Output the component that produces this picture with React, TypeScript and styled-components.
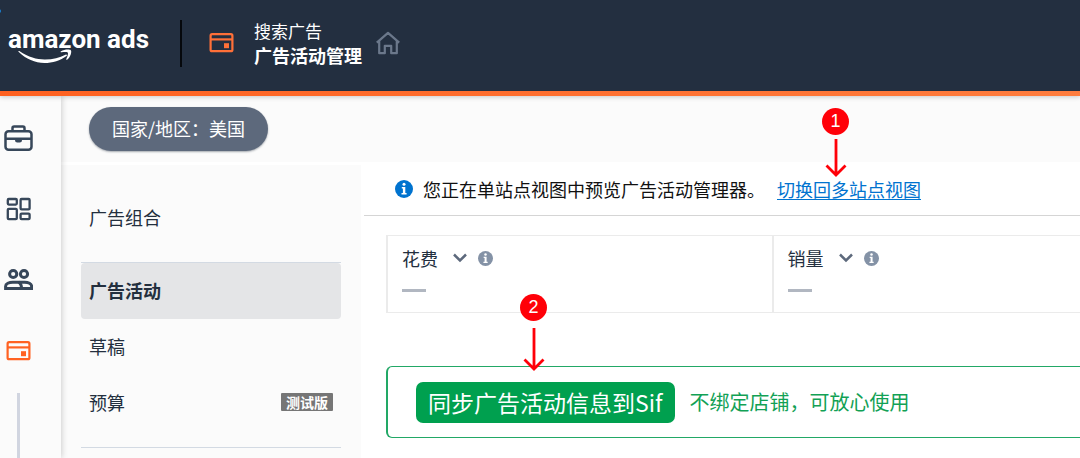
import React from "react";
import styled, { createGlobalStyle } from "styled-components";

const GlobalStyle = createGlobalStyle`
  *, *::before, *::after { box-sizing: border-box; }
  body {
    margin: 0;
    background: #fff;
    color: #232f3e;
    font-family: "Noto Sans CJK SC", sans-serif;
    font-size: 18px;
    line-height: 24px;
    overflow-x: hidden;
  }
`;

const Page = styled.div`
  min-height: 100vh;
  display: flex;
  flex-direction: column;
`;

const Header = styled.header`
  position: relative;
  z-index: 2;
  display: flex;
  align-items: center;
  height: 96px;
  padding: 0 8px 10px;
  color: #fff;
  background:
    linear-gradient(90deg, #ff6120, #ff7d3e) bottom / 100% 5px no-repeat,
    #232f40;
  box-shadow: 0 1px 5px rgba(0, 0, 0, 0.2);
`;

const StatusDot = styled.span`
  position: absolute;
  left: -3px;
  top: 9px;
  width: 4px;
  height: 4px;
  border-radius: 50%;
  background: #1a7fd0;
`;

const Logo = styled.a`
  position: relative;
  display: block;
  width: 144px;
  padding-bottom: 8px;
  color: #fff;
  font-family: Roboto, "Liberation Sans", sans-serif;
  font-weight: 700;
  font-size: 26px;
  line-height: 32px;
  text-decoration: none;
  white-space: nowrap;
`;

const Smile = styled.svg`
  position: absolute;
  left: 10px;
  top: 26px;
`;

const Divider = styled.span`
  width: 2px;
  height: 47px;
  margin: 0 25px 0 28px;
  background: #05080c;
`;

const Titles = styled.div`
  margin: 0 14px 0 18px;
`;

const Section = styled.div`
  font-size: 17px;
  line-height: 24px;
`;

const Title = styled.h1`
  margin: 0;
  font-size: 18px;
  line-height: 24px;
  font-weight: 700;
`;

const IconLink = styled.a`
  display: flex;
`;

const Body = styled.div`
  flex: 1;
  display: flex;
`;

const Rail = styled.nav`
  position: relative;
  z-index: 1;
  flex: none;
  width: 61px;
  padding: 28px 4px 0;
  display: flex;
  flex-direction: column;
  background: #fbfbfb;
  box-shadow: 1px 0 6px rgba(0, 0, 0, 0.18);
`;

const RailLinks = styled.div`
  display: flex;
  flex-direction: column;
  gap: 43px;
`;

const RailLine = styled.span`
  flex: 1;
  width: 3px;
  margin: 28px 0 0 13px;
  background: #d1d5e0;
`;

const Content = styled.div`
  flex: 1;
  min-width: 0;
  display: flex;
  flex-direction: column;
`;

const FilterBar = styled.div`
  height: 66px;
  padding: 11px 28px;
  background: #fbfbfb;
`;

const Pill = styled.button`
  height: 44px;
  padding: 0 23px 2px;
  border: 0;
  border-radius: 22px;
  background: #5d697c;
  color: #fff;
  font: inherit;
  box-shadow: 0 1px 2px rgba(35, 47, 62, 0.4);
`;

const Columns = styled.div`
  flex: 1;
  display: flex;
`;

const Menu = styled.nav`
  flex: none;
  width: 300px;
  margin-top: 3px;
  padding: 25px 20px 8px;
  background: #fbfbfb;
`;

const MenuRule = styled.hr`
  height: 1px;
  margin: 16px 0 0;
  border: 0;
  background: #d3dae3;
`;

const MenuItem = styled.a<{ $active?: boolean }>`
  display: flex;
  align-items: center;
  justify-content: space-between;
  height: 56px;
  padding: 0 8px 2px;
  border-radius: 4px;
  color: #232f3e;
  text-decoration: none;
  font-weight: ${(p) => (p.$active ? 700 : 400)};
  background: ${(p) => (p.$active ? "#e4e5e7" : "transparent")};
`;

const Tag = styled.span`
  padding: 0 5px;
  border-radius: 1px;
  background: #767676;
  color: #fff;
  font-size: 14px;
  line-height: 18px;
  font-weight: 700;
`;

const Main = styled.main`
  flex: 1;
  min-width: 0;
`;

const Notice = styled.div`
  display: flex;
  align-items: center;
  height: 54px;
  margin-left: 3px;
  padding-left: 31px;
  border-bottom: 1px solid #d5d5d5;
  color: #111;
  white-space: nowrap;
`;

const NoticeText = styled.span`
  margin: 0 12px 0 10px;
`;

const NoticeLink = styled.a`
  position: relative;
  color: #0073cf;
  text-underline-offset: 2px;
`;

const Metrics = styled.div`
  display: grid;
  grid-template-columns: 5fr 4fr;
  margin: 19px 0 0 25px;
`;

const Metric = styled.section`
  height: 78px;
  padding: 10px 14px;
  border: solid #ebebeb;
  border-width: 1px 0 1px 2px;
`;

const MetricHead = styled.button`
  display: flex;
  align-items: center;
  padding: 0;
  border: 0;
  background: none;
  color: #232f3e;
  font: inherit;
`;

const Chevron = styled.svg`
  margin: 0 11px 0 15px;
`;

const Dash = styled.div`
  width: 24px;
  height: 3px;
  margin-top: 19px;
  background: #b1b7c1;
`;

const SyncBar = styled.section`
  display: flex;
  align-items: center;
  gap: 15px;
  height: 72px;
  margin: 53px 0 20px 25px;
  padding-left: 28px;
  border: solid #22a866;
  border-width: 1px 0 1px 2px;
  border-radius: 6px 0 0 6px;
  color: #12a155;
  font-size: 20px;
  white-space: nowrap;
`;

const SyncButton = styled.button`
  position: relative;
  height: 41px;
  padding: 0 12px;
  border: 0;
  border-radius: 7px;
  background: #00a04f;
  color: #fff;
  font: inherit;
  font-size: 23px;
  line-height: 40px;
`;

const Marker = styled.span<{ $left: number; $gap: number; $lift: number }>`
  position: absolute;
  left: ${(p) => p.$left}px;
  bottom: calc(100% + ${(p) => p.$lift}px);
  display: flex;
  flex-direction: column;
  align-items: center;
  gap: ${(p) => p.$gap}px;
  pointer-events: none;
`;

const MarkerNumber = styled.span`
  width: 27px;
  height: 27px;
  border-radius: 50%;
  background: #ff0008;
  color: #fff;
  font-family: "Liberation Sans", sans-serif;
  font-size: 18px;
  line-height: 27px;
  text-align: center;
`;

const WalletIcon = ({ color = "#ff6222" }: { color?: string }) => (
  <svg width="29" height="28" viewBox="0 0 29 28" fill="none" stroke={color} strokeWidth="2.2" aria-hidden="true">
    <rect x="3.6" y="5.2" width="21.800" height="17" rx="1.500" />
    <path d="M3.600 10.400h21.800" />
    <rect x="17" y="14.200" width="5" height="5" fill={color} stroke="none" />
  </svg>
);

const BriefcaseIcon = () => (
  <svg width="29" height="28" viewBox="0 0 29 28" fill="none" stroke="#37475a" strokeWidth="2.5" aria-hidden="true">
    <rect x="1.5" y="7.300" width="26" height="18.400" rx="3" />
    <path d="M8.500 7V4.200a1.600 1.600 0 0 1 1.600-1.600h8.800a1.600 1.600 0 0 1 1.600 1.600V7M1.500 14.700h26" />
    <path d="M11 14.500h7v1.800a2.200 2.200 0 0 1-2.200 2.200h-2.600a2.200 2.200 0 0 1-2.200-2.200z" fill="#37475a" stroke="none" />
  </svg>
);

const GridIcon = () => (
  <svg width="29" height="28" viewBox="0 0 29 28" fill="none" stroke="#37475a" strokeWidth="2.300" aria-hidden="true">
    <rect x="3.800" y="4" width="9" height="5.600" rx="1" />
    <rect x="16.600" y="4" width="9" height="10.400" rx="1" />
    <rect x="3.800" y="13.800" width="9" height="10.400" rx="1" />
    <rect x="16.600" y="18.600" width="9" height="5.600" rx="1" />
  </svg>
);

const PeopleIcon = () => (
  <svg width="29" height="28" viewBox="0 0 29 28" fill="none" stroke="#37475a" strokeWidth="3" aria-hidden="true">
    <circle cx="9.200" cy="8" r="3.600" />
    <circle cx="20" cy="8" r="3.600" />
    <path d="M1.600 22.500v-2.300c0-2.500 3.500-4 7.200-4h11.800c3.700 0 7 1.500 7 4v2.300z" />
    <path d="M14.500 16.200c2 1 3 2.600 3 6.300" />
  </svg>
);

const HomeIcon = () => (
  <svg width="24" height="24" viewBox="0 0 24 24" fill="none" stroke="#6b788b" strokeWidth="2.200" aria-hidden="true">
    <path d="M.8 11.600 12 1.800l11.200 9.800M3.200 10v12.200h5.600v-7.400h6.400v7.400h5.600V10" strokeLinejoin="round" />
  </svg>
);

const InfoIcon = ({ size, color }: { size: number; color: string }) => (
  <svg width={size} height={size} viewBox="0 0 18 18" aria-hidden="true">
    <circle cx="9" cy="9" r="9" fill={color} />
    <circle cx="9" cy="4.300" r="1.500" fill="#fff" />
    <path d="M6.800 7h3.500v6h1.300v1.500H6.500V13h1.400V8.400H6.800z" fill="#fff" />
  </svg>
);

type StepProps = { n: number; left: number; gap: number; length: number; lift: number };

const Step = ({ n, left, gap, length, lift }: StepProps) => (
  <Marker $left={left} $gap={gap} $lift={lift} aria-hidden="true">
    <MarkerNumber>{n}</MarkerNumber>
    <svg width="22" height={length} viewBox={`0 0 22 ${length}`} fill="none" stroke="#ff0008" strokeWidth="2.800">
      <path d={`M11 0V${length - 2}M1.500 ${length - 11.5}L11 ${length - 2}l9.500-9.500`} />
    </svg>
  </Marker>
);

const MetricCard = ({ name }: { name: string }) => (
  <Metric>
    <MetricHead type="button">
      {name}
      <Chevron width="14" height="10" viewBox="0 0 14 10" fill="none" stroke="#5d697c" strokeWidth="2.500">
        <path d="M1 1.500l6 6 6-6" />
      </Chevron>
      <InfoIcon size={15} color="#8492a6" />
    </MetricHead>
    <Dash />
  </Metric>
);

export default function App() {
  return (
    <Page lang="zh-CN">
      <GlobalStyle />
      <Header>
        <StatusDot />
        <Logo href="#">
          amazon ads
          <Smile width="54" height="15" viewBox="0 1 54 16" preserveAspectRatio="none" fill="#fff" aria-hidden="true">
            <path d="M1.300 3.200C11 10.200 19 12.300 27 12.200c8-.1 14.500-2 20.500-5.200 1.200-.6 2 .6 1 1.500C42.500 13.400 34.500 16 26.500 16 17 16 8 11.700.8 4.300c-.8-.8-.3-1.600.5-1.100z" />
            <path d="M43 3.400c3-2.200 8.600-2.300 9.800-1.200 1.200 1.300-.2 7.200-3.400 10-.9.700-1.500.3-1.100-.6.900-2.200 2.200-5.700 1.500-6.700-.7-.9-4-.6-6.300-.4-1 .1-1.200-.6-.5-1.100z" />
          </Smile>
        </Logo>
        <Divider />
        <WalletIcon color="#ff7038" />
        <Titles>
          <Section>搜索广告</Section>
          <Title>广告活动管理</Title>
        </Titles>
        <IconLink href="#" aria-label="首页">
          <HomeIcon />
        </IconLink>
      </Header>
      <Body>
        <Rail>
          <RailLinks>
            <IconLink href="#" aria-label="业务"><BriefcaseIcon /></IconLink>
            <IconLink href="#" aria-label="控制面板"><GridIcon /></IconLink>
            <IconLink href="#" aria-label="受众"><PeopleIcon /></IconLink>
            <IconLink href="#" aria-label="搜索广告"><WalletIcon /></IconLink>
          </RailLinks>
          <RailLine />
        </Rail>
        <Content>
          <FilterBar>
            <Pill type="button">国家/地区：美国</Pill>
          </FilterBar>
          <Columns>
            <Menu>
              <MenuItem href="#">广告组合</MenuItem>
              <MenuRule />
              <MenuItem href="#" $active>广告活动</MenuItem>
              <MenuItem href="#">草稿</MenuItem>
              <MenuItem href="#">预算<Tag>测试版</Tag></MenuItem>
              <MenuRule />
            </Menu>
            <Main>
              <Notice>
                <InfoIcon size={18} color="#0073cf" />
                <NoticeText>您正在单站点视图中预览广告活动管理器。</NoticeText>
                <NoticeLink href="#">
                  切换回多站点视图
                  <Step n={1} left={45} gap={4} length={38} lift={0} />
                </NoticeLink>
              </Notice>
              <Metrics>
                <MetricCard name="花费" />
                <MetricCard name="销量" />
              </Metrics>
              <SyncBar>
                <SyncButton type="button">
                  同步广告活动信息到Sif
                  <Step n={2} left={104} gap={7} length={43} lift={11} />
                </SyncButton>
                <span>不绑定店铺，可放心使用</span>
              </SyncBar>
            </Main>
          </Columns>
        </Content>
      </Body>
    </Page>
  );
}
